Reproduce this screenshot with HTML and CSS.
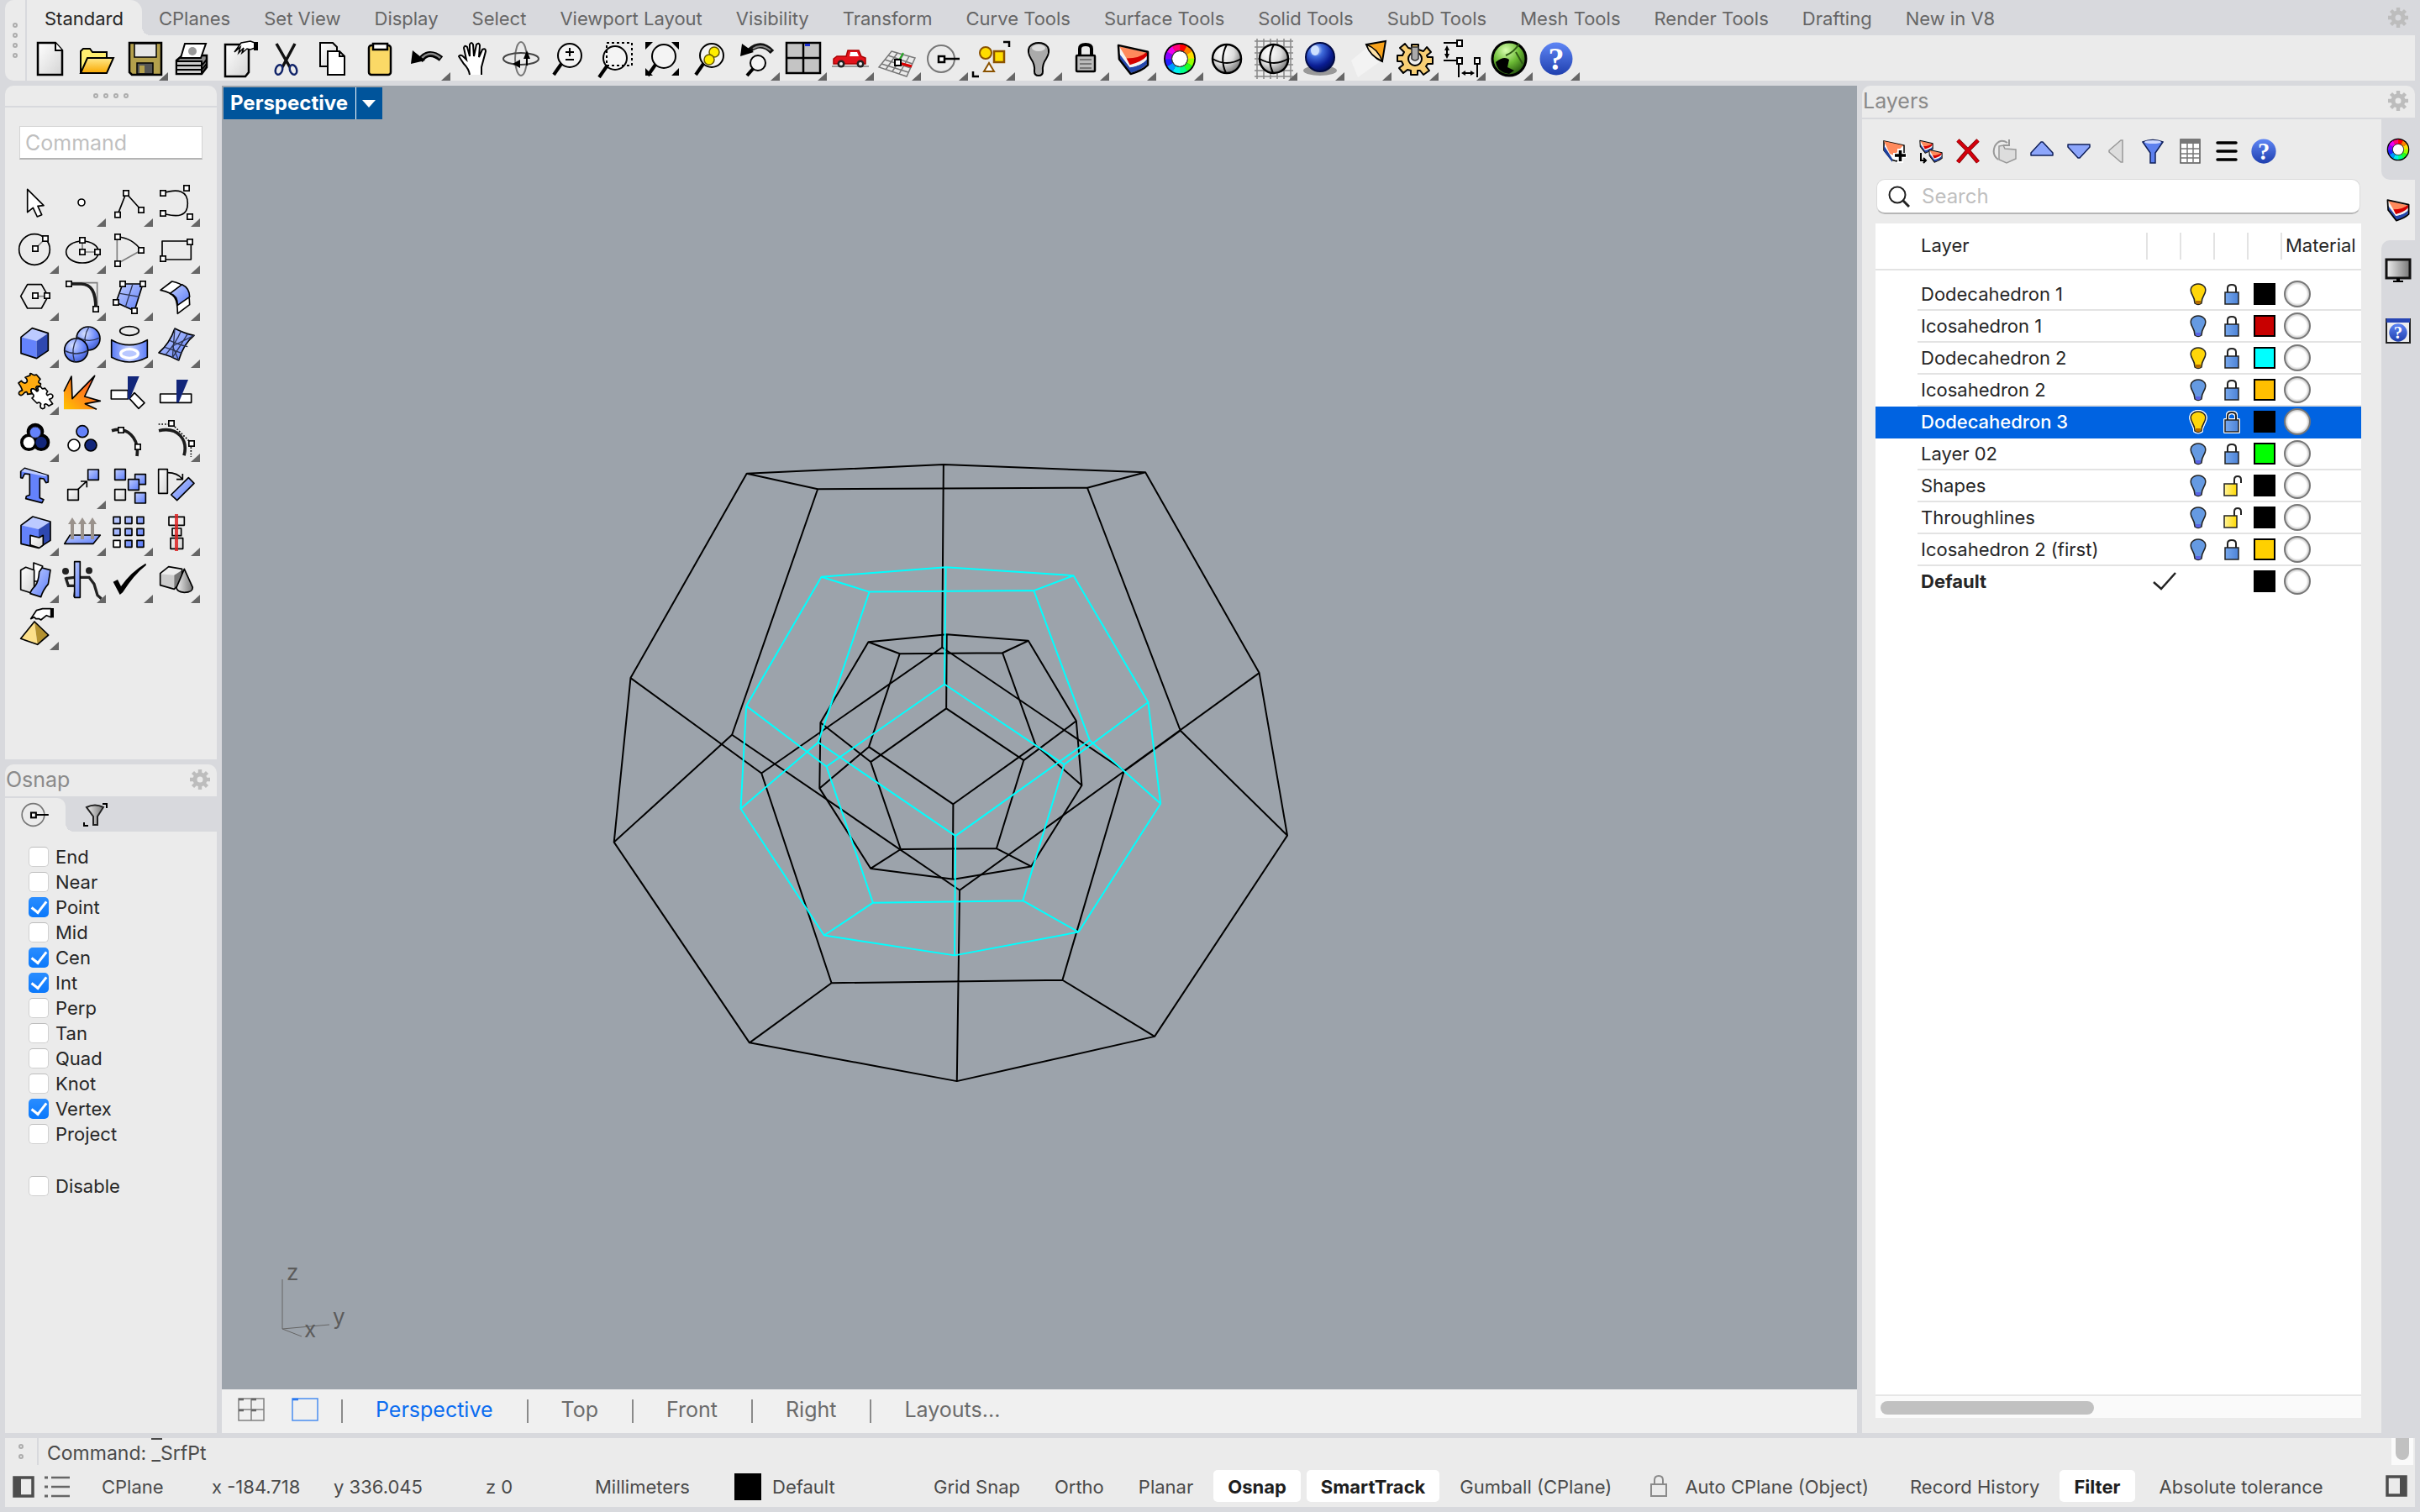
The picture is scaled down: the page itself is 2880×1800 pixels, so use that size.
FILE: index.html
```html
<!DOCTYPE html>
<html lang="en">
<head>
<meta charset="utf-8">
<title>Perspective</title>
<link rel="stylesheet" href="styles.css">
</head>
<body>
<svg class="defs" aria-hidden="true">
  <defs>
    <linearGradient id="paper" x1="0" y1="0" x2="1" y2="1"><stop offset="0" stop-color="#fff"/><stop offset="1" stop-color="#d4d4d4"/></linearGradient>
    <linearGradient id="blue" x1="0" y1="0" x2="1" y2="1"><stop offset="0" stop-color="#c2cfff"/><stop offset="1" stop-color="#5b7cf8"/></linearGradient>
    <linearGradient id="band" x1="0" x2="1"><stop offset="0" stop-color="#5b7cf8"/><stop offset=".5" stop-color="#c2cfff"/><stop offset="1" stop-color="#5b7cf8"/></linearGradient>
    <linearGradient id="gold" x1="0" y1="0" x2="0" y2="1"><stop offset="0" stop-color="#ffe98a"/><stop offset="1" stop-color="#f9a800"/></linearGradient>
    <linearGradient id="fire" x1="1" y1="0" x2="0" y2="1"><stop offset="0.2" stop-color="#ff5a2a"/><stop offset="1" stop-color="#ffc400"/></linearGradient>
    <linearGradient id="help" x1="0" y1="0" x2="0" y2="1"><stop offset="0" stop-color="#5f86f5"/><stop offset="1" stop-color="#1f3fae"/></linearGradient>
    <linearGradient id="steel" x1="0" x2="1"><stop offset="0" stop-color="#eee"/><stop offset="1" stop-color="#777"/></linearGradient>
    <linearGradient id="lockfill" x1="0" x2="1"><stop offset="0" stop-color="#78a9ee"/><stop offset="1" stop-color="#4c82d6"/></linearGradient>
    <linearGradient id="openfill" x1="0" x2="1"><stop offset="0" stop-color="#fff39a"/><stop offset="1" stop-color="#ffd900"/></linearGradient>
    <radialGradient id="ballw" cx=".35" cy=".3" r=".8"><stop offset="0" stop-color="#fff"/><stop offset=".5" stop-color="#ddd"/><stop offset="1" stop-color="#666"/></radialGradient>
    <radialGradient id="ballb" cx=".35" cy=".3" r=".8"><stop offset="0" stop-color="#d5dfff"/><stop offset=".6" stop-color="#6a88fa"/><stop offset="1" stop-color="#3a52c0"/></radialGradient>
    <radialGradient id="balln" cx=".35" cy=".25" r=".8"><stop offset="0" stop-color="#e8f2ff"/><stop offset=".3" stop-color="#3f6bdc"/><stop offset=".7" stop-color="#0a1d93"/><stop offset="1" stop-color="#000c50"/></radialGradient>
    <radialGradient id="ballg" cx=".4" cy=".25" r=".8"><stop offset="0" stop-color="#d8ffb0"/><stop offset=".5" stop-color="#6cbb35"/><stop offset="1" stop-color="#1d4a0a"/></radialGradient>
    <radialGradient id="rim"><stop offset=".72" stop-color="#fff"/><stop offset="1" stop-color="#b8b8b8"/></radialGradient>

    <g id="hd"><rect x="-9.500" y="-9.500" width="19" height="19" fill="#fff" stroke="#000" stroke-width="5"/></g>
    <g id="lens"><path d="M18 34 9 47" stroke="#000" stroke-width="4" fill="none"/><circle cx="28" cy="24" r="14" fill="#f6f6f6" fill-opacity=".8" stroke="#000" stroke-width="2"/></g>

    <symbol id="gear" viewBox="0 0 24 24"><g fill="none" stroke="#bdbdbd"><circle cx="12" cy="12" r="6" stroke-width="5"/><path stroke-width="4.400" d="M12 0v5M12 19v5M0 12h5M19 12h5M3.500 3.500l3.500 3.500M17 17l3.500 3.500M20.500 3.500 17 7M7 17l-3.500 3.500"/></g></symbol>
    <symbol id="wheel" viewBox="0 0 40 40"><circle cx="20" cy="20" r="19" fill="#000"/><circle cx="20" cy="20" r="9" fill="#fff"/>
      <g fill="none" stroke-width="7.500">
        <path stroke="#f00" d="M20 6.500A13.500 13.500 0 0 1 26.750 8.300"/><path stroke="#ff8000" d="M26.500 8.200A13.500 13.500 0 0 1 31.690 13.250"/><path stroke="#fd0" d="M31.500 13A13.500 13.500 0 0 1 33.500 20"/><path stroke="#9f0" d="M33.500 19.700A13.500 13.500 0 0 1 31.690 26.750"/><path stroke="#2f2" d="M31.800 26.500A13.500 13.500 0 0 1 26.750 31.690"/><path stroke="#0f8" d="M27 31.500A13.500 13.500 0 0 1 20 33.500"/><path stroke="#0ee" d="M20.300 33.500A13.500 13.500 0 0 1 13.250 31.690"/><path stroke="#09f" d="M13.500 31.800A13.500 13.500 0 0 1 8.310 26.750"/><path stroke="#22f" d="M8.500 27A13.500 13.500 0 0 1 6.500 20"/><path stroke="#80f" d="M6.500 20.300A13.500 13.500 0 0 1 8.310 13.250"/><path stroke="#e0e" d="M8.200 13.500A13.500 13.500 0 0 1 13.250 8.310"/><path stroke="#f07" d="M13 8.500A13.500 13.500 0 0 1 20.200 6.500"/>
      </g><circle cx="20" cy="20" r="9.500" fill="none" stroke="#444" stroke-width="1"/></symbol>
    <symbol id="layers" viewBox="0 0 40 40"><path d="M2 3 38 11V27Q31 34 17 38L3 20z" fill="#f4f4f4"/><path d="M4 20 17 37Q31 33 37 26V20Q30 28 16 30L3 13z" fill="#2547ac"/><path d="M3 10 16 30Q30 28 37 20V16Q30 24 16 26z" fill="#f2f2f2"/><path d="M3 4 16 26Q31 22 37 12z" fill="#ff8a5c"/><path d="M12 19 16 27Q31 23 37 16V11Q28 19 12 19z" fill="#d40000"/><path d="M2 3 38 11V27Q31 34 17 38L3 20z" fill="none" stroke="#000" stroke-width="2.500" stroke-linejoin="round"/></symbol>
    <symbol id="helpball" viewBox="0 0 40 40"><circle cx="20" cy="20" r="19.500" fill="url(#help)"/><text x="20" y="33" class="qmark">?</text></symbol>
    <symbol id="snap" viewBox="0 0 40 36"><circle cx="17" cy="18" r="16" fill="none" stroke="#777" stroke-width="2"/><path d="M20 18H39" stroke="#000" stroke-width="2.500"/><rect x="14" y="15" width="7" height="7" fill="#fff" stroke="#000" stroke-width="2.500"/></symbol>
    <symbol id="bulb-on" viewBox="0 0 24 32"><path d="M8 27Q8 22 5 17Q2 12 4 8Q7 4 12 4T20 8Q22 12 19 17Q16 22 16 27Q12 30 8 27z" fill="#ffd60a" stroke="#222" stroke-width="1.500"/><path d="M9 24h6v3q-3 2-6 0z" fill="#b56a00"/></symbol>
    <symbol id="bulb-off" viewBox="0 0 24 32"><path d="M8 27Q8 22 5 17Q2 12 4 8Q7 4 12 4T20 8Q22 12 19 17Q16 22 16 27Q12 30 8 27z" fill="#659ae2" stroke="#222" stroke-width="1.500"/><path d="M9 24h6v3q-3 2-6 0z" fill="#5a63e6"/></symbol>
    <symbol id="locked" viewBox="0 0 24 32"><path d="M7 14V9Q7 5 12 5T17 9V14" fill="none" stroke="#222" stroke-width="2"/><rect x="4" y="14" width="16" height="14" fill="url(#lockfill)" stroke="#222" stroke-width="1.500"/></symbol>
    <symbol id="unlocked" viewBox="0 0 24 32"><path d="M15 14V9Q15 5 19 5T23 9V13" fill="none" stroke="#222" stroke-width="2"/><rect x="3" y="14" width="15" height="14" fill="url(#openfill)" stroke="#222" stroke-width="1.500"/></symbol>
    <symbol id="ball" viewBox="0 0 32 32"><circle cx="16" cy="16" r="15" fill="url(#rim)" stroke="#777" stroke-width="2"/></symbol>
  </defs>
</svg>

<header class="ribbon">
  <div class="grip grip-v"><i></i><i></i><i></i><i></i></div>
  <div class="ribbon-body">
    <nav class="ribbon-tabs">
      <button class="on">Standard</button><button>CPlanes</button><button>Set View</button><button>Display</button><button>Select</button><button>Viewport Layout</button><button>Visibility</button><button>Transform</button><button>Curve Tools</button><button>Surface Tools</button><button>Solid Tools</button><button>SubD Tools</button><button>Mesh Tools</button><button>Render Tools</button><button>Drafting</button><button>New in V8</button>
      <button class="gear-btn" aria-label="Toolbar options"><svg class="gear"><use href="#gear"/></svg></button>
    </nav>
    <div class="tools">
      <button aria-label="New"><svg viewBox="0 0 56 54"><path d="M13 9H34L42 18V47H13z" fill="url(#paper)" stroke="#000" stroke-width="2.500"/><path d="M34 9V18H42" fill="#fff" stroke="#000" stroke-width="2"/></svg></button>
      <button aria-label="Open"><svg viewBox="0 0 56 54"><path d="M8 45V19L11 16H19L22 20H39V27" fill="#ffee70" stroke="#000" stroke-width="2"/><path d="M8 45 16 27H47L39 45z" fill="url(#gold)" stroke="#000" stroke-width="2"/></svg></button>
      <button class="more" aria-label="Save"><svg viewBox="0 0 56 54"><path d="M10 9H48V47H13L10 44z" fill="#b4a04c" stroke="#000" stroke-width="2.500"/><rect x="16" y="10" width="26" height="16" fill="#e6e6e6" stroke="#000" stroke-width="1.500"/><rect x="19" y="33" width="19" height="13" fill="#555" stroke="#000" stroke-width="1.500"/><rect x="22" y="36" width="6" height="9" fill="#b4a04c"/></svg></button>
      <button aria-label="Print"><svg viewBox="0 0 56 54"><path d="M10 30 17 24H46V38L40 46H10z" fill="#888" stroke="#000" stroke-width="2.500"/><path d="M10 31H40V46H10z" fill="#ccc" stroke="#000" stroke-width="2"/><path d="M15 27 20 10H45L39 27z" fill="#fff" stroke="#000" stroke-width="2"/><circle cx="29" cy="19" r="5" fill="#999"/><path d="M10 36H40L46 29M10 41H40L46 34" stroke="#000" stroke-width="2" fill="none"/></svg></button>
      <button aria-label="Document properties"><svg viewBox="0 0 56 54"><path d="M12 11H35L40 17V44L36 49H12z" fill="url(#paper)" stroke="#000" stroke-width="2.500"/><path d="M23 20 31 9 42 7 50 10V14L42 17 38 16 32 21 34 15 28 21 30 14z" fill="#fff" stroke="#000" stroke-width="1.500"/><path d="M46 8h5v10h-5z"/></svg></button>
      <button aria-label="Cut"><svg viewBox="0 0 56 54"><path d="M17 10 33 38M39 10 24 38" stroke="#111" stroke-width="3.500" fill="none"/><g fill="none" stroke="#12256a" stroke-width="2.500"><ellipse cx="20" cy="41" rx="4" ry="6" transform="rotate(20 20 41)"/><ellipse cx="37" cy="41" rx="4" ry="6" transform="rotate(-20 37 41)"/></g></svg></button>
      <button aria-label="Copy"><svg viewBox="0 0 56 54"><path d="M13 9H28L33 14V37H13z" fill="url(#paper)" stroke="#000" stroke-width="2"/><path d="M22 19H36L42 25V47H22z" fill="#fff" stroke="#000" stroke-width="2"/><path d="M36 19V25H42" fill="none" stroke="#000" stroke-width="2"/></svg></button>
      <button aria-label="Paste"><svg viewBox="0 0 56 54"><rect x="15" y="12" width="26" height="35" rx="3" fill="#fbd966" stroke="#000" stroke-width="2.500"/><path d="M20 10H37V17H20z" fill="#fff" stroke="#000" stroke-width="2.500"/></svg></button>
      <button class="more" aria-label="Undo"><svg viewBox="0 0 56 54"><path d="M20 30Q30 16 45 28" fill="none" stroke="#000" stroke-width="7"/><path d="M22 27Q32 17 44 27" fill="none" stroke="#888" stroke-width="2.500"/><path d="M9 34 11 18 26 30z"/></svg></button>
      <button aria-label="Pan"><svg viewBox="0 0 56 54"><path d="M23 47Q22 40 16 34L10 25Q12 22 16 26L19 29 16 15Q17 11 20 14L23 25 23 11Q25 7 27 11L28 25 31 11Q34 8 35 12L34 26 38 17Q42 15 42 19L37 38V47" fill="#fff" stroke="#000" stroke-width="2"/></svg></button>
      <button aria-label="Rotate view"><svg viewBox="0 0 56 54"><ellipse cx="28" cy="28" rx="7" ry="20" fill="none" stroke="#777" stroke-width="2"/><ellipse cx="28" cy="28" rx="21" ry="7" fill="none" stroke="#444" stroke-width="2"/><path d="M35 18 39 28H31zM18 34 27 29V39z"/><path d="M35 22V36" stroke="#000" stroke-width="2"/></svg></button>
      <button aria-label="Zoom"><svg viewBox="0 0 56 54"><use href="#lens" x="2"/><path d="M25 20H35M30 15V25M25 29H35" stroke="#000" stroke-width="2"/></svg></button>
      <button aria-label="Zoom window"><svg viewBox="0 0 56 54"><use href="#lens" y="3"/><path d="M18 9H48V36H18z" fill="none" stroke="#000" stroke-width="2" stroke-dasharray="3 3"/></svg></button>
      <button aria-label="Zoom extents"><svg viewBox="0 0 56 54"><use href="#lens" x="2" y="1"/><path d="M8 8H17L8 17zM48 8H39L48 17zM48 48H39L48 39zM8 48H17L8 39z"/></svg></button>
      <button aria-label="Zoom selected"><svg viewBox="0 0 56 54"><use href="#lens" x="3"/><circle cx="34" cy="20" r="6" fill="#fe0" stroke="#665800" stroke-width="1.500"/><circle cx="28" cy="29" r="6" fill="#fe0" stroke="#665800" stroke-width="1.500"/></svg></button>
      <button class="more" aria-label="Undo view"><svg viewBox="0 0 56 54"><path d="M20 18Q34 6 47 20" fill="none" stroke="#111" stroke-width="6"/><path d="M24 16Q34 9 45 18" fill="none" stroke="#888" stroke-width="2"/><path d="M9 25 11 10 25 20z"/><path d="M24 40 17 48" stroke="#000" stroke-width="4"/><circle cx="30" cy="33" r="9" fill="#f4f4f4" stroke="#000" stroke-width="2"/></svg></button>
      <button class="more" aria-label="4 view"><svg viewBox="0 0 56 54"><path d="M8 9H48V45H8z" fill="#c4c4c4" stroke="#000" stroke-width="2.500"/><path d="M28 9V45M8 27H48" stroke="#000" stroke-width="2.500"/><path d="M30 10h6v3h-6z" fill="#1b2fd0"/></svg></button>
      <button class="more" aria-label="Named views"><svg viewBox="0 0 56 54"><path d="M6 37H50" stroke="#999" stroke-width="2"/><path d="M8 34V28L12 25H23L25 18H38L41 25 46 27V34z" fill="#e3121b" stroke="#a00" stroke-width="1.500"/><path d="M28 20H36L38 25H27z" fill="#fff"/><circle cx="17" cy="34" r="4.500" fill="#222"/><circle cx="40" cy="34" r="4.500" fill="#222"/><circle cx="17" cy="34" r="2" fill="#eee"/><circle cx="40" cy="34" r="2" fill="#eee"/></svg></button>
      <button class="more" aria-label="Set CPlane"><svg viewBox="0 0 56 54"><path d="M21 19 49 27 39 49 6 38zM28 21 14 41M35 23 22 43M42 25 30 46M17 24 46 34M13 29 44 39M9 34 41 44" fill="none" stroke="#777" stroke-width="1.500"/><path d="M28 33 35 21" stroke="#2a2" stroke-width="2"/><path d="M30 33 45 37" stroke="#d00" stroke-width="3"/><rect x="25" y="29" width="7" height="7" fill="#fff" stroke="#000" stroke-width="2"/></svg></button>
      <button class="more" aria-label="Object snap"><svg viewBox="0 0 56 54"><use href="#snap" x="7" y="10" width="40" height="36"/></svg></button>
      <button class="more" aria-label="Select"><svg viewBox="0 0 56 54"><circle cx="21" cy="21" r="7" fill="#fd0" stroke="#8a5200" stroke-width="2"/><rect x="31" y="19" width="12" height="13" fill="#fd0" stroke="#8a5200" stroke-width="2.500"/><path d="M25 33 31 43H19z" fill="#fff" stroke="#8a5200" stroke-width="2"/><path d="M42 8H49V14M6 43V49H13" fill="none" stroke="#000" stroke-width="2.500"/></svg></button>
      <button class="more" aria-label="Visibility"><svg viewBox="0 0 56 54"><path d="M23 43Q24 35 19 28Q14 20 17 14Q21 9 28 9T39 14Q42 20 37 28Q32 35 33 43Q33 48 28 48T23 43z" fill="#aaa" stroke="#000" stroke-width="2"/><ellipse cx="28" cy="15" rx="8" ry="4" fill="#ddd"/></svg></button>
      <button class="more" aria-label="Lock"><svg viewBox="0 0 56 54"><path d="M21 24V16Q21 11 28 11T35 16V24" fill="none" stroke="#000" stroke-width="4"/><rect x="17" y="24" width="22" height="19" rx="1" fill="#bbb" stroke="#000" stroke-width="2.500"/><path d="M21 29H35M21 34H35M21 39H35" stroke="#777" stroke-width="2"/></svg></button>
      <button class="more" aria-label="Layers"><svg viewBox="0 0 56 54"><use href="#layers" x="9" y="9" width="39" height="39"/></svg></button>
      <button class="more" aria-label="Properties"><svg viewBox="0 0 56 54"><use href="#wheel" x="8" y="8" width="40" height="40"/></svg></button>
      <button aria-label="Shade"><svg viewBox="0 0 56 54"><circle cx="28" cy="28" r="17" fill="url(#ballw)" stroke="#000" stroke-width="2.500"/><path d="M28 11Q19 28 27 45M11 28Q28 38 45 28" fill="none" stroke="#000" stroke-width="2"/></svg></button>
      <button class="more" aria-label="Render shade"><svg viewBox="0 0 56 54"><path d="M5 7H51M5 14H51M5 42H51M5 49H51M5 21H14M5 28H12M5 35H14M42 21H51M44 28H51M42 35H51M8 4V52M16 4V52M24 4V12M32 4V12M40 4V52M48 4V52M24 44V52M32 44V52" stroke="#888" stroke-width="1.500"/><circle cx="28" cy="28" r="17" fill="url(#ballw)" stroke="#000" stroke-width="2.500"/><path d="M28 11Q19 28 27 45M11 28Q28 38 45 28" fill="none" stroke="#000" stroke-width="2"/></svg></button>
      <button class="more" aria-label="Render"><svg viewBox="0 0 56 54"><ellipse cx="27" cy="42" rx="20" ry="6" fill="#999"/><circle cx="27" cy="26" r="17" fill="url(#balln)" stroke="#000a44" stroke-width="2"/><ellipse cx="21" cy="18" rx="5" ry="6" fill="#cfe2ff"/></svg></button>
      <button class="more" aria-label="Spotlight"><svg viewBox="0 0 56 54"><path d="M30 12 8 30 16 50 44 30z" fill="#f8f8f8" opacity=".6"/><path d="M26 11 49 7 45 31Q32 26 26 11z" fill="#f8a31c" stroke="#000" stroke-width="2"/><path d="M26 11Q30 24 45 31 40 16 26 11z" fill="#ffe2a8" stroke="#000" stroke-width="1.500"/></svg></button>
      <button class="more" aria-label="Options"><svg viewBox="0 0 56 54"><path d="M24 11H32V17L38 19 42 14 47 20 42 24 43 26H49V34H43L41 37 45 42 38 47 34 42H31V47H23V42L19 41 14 45 9 39 14 35 12 31H7V24H13L15 20 10 15 16 10 20 15 24 16z" fill="#f8cf75" stroke="#000" stroke-width="2" stroke-linejoin="round"/><circle cx="28" cy="28" r="8" fill="#eee" stroke="#000" stroke-width="2"/><path d="M24 14h8v14q-4 4-8 0z" fill="#aaa" stroke="#333" stroke-width="1.500"/></svg></button>
      <button class="more" aria-label="Dimension"><svg viewBox="0 0 56 54"><path d="M6 9H22M6 30H22M10 14V26M24 34V50M46 34V50M29 45H41" fill="none" stroke="#000" stroke-width="2"/><path d="M10 12 13 18H7zM10 28 13 22H7zM27 45 32 42V48zM43 45 38 42V48z"/><g fill="#fff" stroke="#000" stroke-width="2"><path d="M22 6h6v7h-6zM22 27h6v7h-6zM43 27h6v7h-6z"/></g></svg></button>
      <button class="more" aria-label="Grasshopper"><svg viewBox="0 0 56 54"><circle cx="28" cy="28" r="20" fill="url(#ballg)" stroke="#000" stroke-width="3"/><path d="M12 32Q22 24 28 29L26 38 34 42 28 46Q14 44 12 32z"/><path d="M24 24Q34 20 40 10M36 20 44 34" fill="none" stroke="#305b16" stroke-width="2"/></svg></button>
      <button class="more" aria-label="Help"><svg viewBox="0 0 56 54"><use href="#helpball" x="8" y="8" width="40" height="40"/></svg></button>
    </div>
  </div>
</header>

<main class="work">
  <div class="left">
    <section class="panel palette">
      <div class="grip grip-h"><i></i><i></i><i></i><i></i></div>
      <input class="cmd" type="text" placeholder="Command" aria-label="Command">
      <div class="grid">
        <button aria-label="Select"><svg viewBox="0 0 168 168"><path class="w" d="M56 34V116L76 100 91 132 107 125 93 94 114 92z"/></svg></button>
        <button class="more" aria-label="Point"><svg viewBox="0 0 168 168"><circle class="w" cx="81" cy="81" r="12"/></svg></button>
        <button class="more" aria-label="Polyline"><svg viewBox="0 0 168 168"><path class="k" d="M42 125 72 48 126 108"/><use href="#hd" x="72" y="48"/><use href="#hd" x="42" y="125"/><use href="#hd" x="126" y="108"/></svg></button>
        <button class="more" aria-label="Curve"><svg viewBox="0 0 168 168"><path class="k" d="M36 48C90 30 124 40 124 85C124 130 90 136 36 120"/><use href="#hd" x="120" y="30"/><use href="#hd" x="36" y="48"/><use href="#hd" x="36" y="120"/><use href="#hd" x="132" y="132"/></svg></button>

        <button class="more" aria-label="Circle"><svg viewBox="0 0 168 168"><circle class="k" cx="81" cy="81" r="55"/><path class="g" d="M84 78 120 42"/><use href="#hd" x="120" y="42"/><use href="#hd" x="84" y="78"/></svg></button>
        <button class="more" aria-label="Ellipse"><svg viewBox="0 0 168 168"><ellipse class="k" cx="84" cy="90" rx="58" ry="39"/><path class="g" d="M84 48V90H138"/><use href="#hd" x="84" y="48"/><use href="#hd" x="84" y="90"/><use href="#hd" x="138" y="90"/></svg></button>
        <button class="more" aria-label="Arc"><svg viewBox="0 0 168 168"><path class="g" d="M40 36V132L126 84"/><path class="k" d="M42 36Q95 40 126 84"/><use href="#hd" x="42" y="36"/><use href="#hd" x="126" y="84"/><use href="#hd" x="42" y="132"/></svg></button>
        <button class="more" aria-label="Rectangle"><svg viewBox="0 0 168 168"><path class="k" d="M33 51H136V117H33z"/><use href="#hd" x="132" y="54"/><use href="#hd" x="36" y="114"/></svg></button>

        <button class="more" aria-label="Polygon"><svg viewBox="0 0 168 168"><path class="k" d="M32 80 56 38H106L130 80 106 123H56z"/><path class="g" d="M84 80H126"/><use href="#hd" x="84" y="78"/><use href="#hd" x="126" y="78"/></svg></button>
        <button class="more" aria-label="Fillet"><svg viewBox="0 0 168 168"><path class="g" d="M36 32H137V126"/><path class="thick" d="M36 36H80C116 38 132 62 132 126"/><use href="#hd" x="36" y="36"/><use href="#hd" x="132" y="126"/></svg></button>
        <button class="more" aria-label="Surface from points"><svg viewBox="0 0 168 168"><path class="b" d="M60 36H132L102 132 36 102z"/><path class="t" d="M96 36 70 118M50 70 120 82"/><use href="#hd" x="60" y="36"/><use href="#hd" x="132" y="36"/><use href="#hd" x="102" y="132"/><use href="#hd" x="36" y="102"/></svg></button>
        <button class="more" aria-label="Sweep"><svg viewBox="0 0 168 168"><path class="w" d="M27 58 68 27C108 34 131 55 131 110L88 142C88 90 80 68 27 58z"/><path class="b" d="M61 70 104 38C125 48 131 62 131 82L88 112C88 90 82 76 61 70z"/></svg></button>

        <button class="more" aria-label="Box"><svg viewBox="0 0 168 168"><path fill="#bccaff" d="M73 26 130 44 89 72 33 58z"/><path fill="#6482fb" d="M33 58 89 72V134L33 116z"/><path fill="#2e48b0" d="M89 72 130 44V106L89 134z"/><path class="k" d="M73 26 130 44V106L89 134 33 116V58z"/></svg></button>
        <button class="more" aria-label="Boolean"><svg viewBox="0 0 168 168"><circle class="k sphere" cx="105" cy="63" r="42"/><path class="t" d="M64 56Q105 82 146 60M108 21Q84 60 98 100"/><circle class="k sphere" cx="62" cy="105" r="42"/><path class="t" d="M21 106Q62 128 103 106M64 63Q42 100 56 146"/></svg></button>
        <button class="more" aria-label="Project"><svg viewBox="0 0 168 168"><ellipse class="k" cx="84" cy="36" rx="34" ry="16"/><path class="k band" d="M20 68Q84 104 148 68V130Q84 164 20 130z"/><ellipse cx="84" cy="117" rx="31" ry="16" fill="#b9c8ff" stroke="#fff" stroke-width="10"/></svg></button>
        <button class="more" aria-label="Mesh"><svg viewBox="0 0 168 168"><path class="b" d="M78 27Q110 44 147 52Q110 80 92 141Q60 124 21 114Q60 80 78 27z"/><path class="t" d="M60 70Q94 86 124 92M42 94Q74 104 104 116M100 37Q82 80 45 121M124 46Q100 86 70 131M78 27 70 131M147 52 70 90 92 141"/></svg></button>

        <button class="more" aria-label="Join"><svg viewBox="0 0 168 168"><path class="k orange" d="M24 54 34 46Q46 60 54 50 58 42 48 34L66 26Q62 16 72 22 80 28 88 24L102 40Q92 50 98 54 108 54 100 66 90 62 86 70L92 84Q78 70 70 76 66 84 74 92L56 94Q56 82 46 88 34 104 26 94 22 84 38 80 34 68 24 54z"/><path class="w" d="M74 92Q66 84 70 76 78 70 90 84 98 82 92 72 96 62 106 70 108 78 118 72L128 84Q120 94 128 98 140 88 146 98 150 108 134 112L146 128 132 136Q122 124 116 132 122 144 110 146 98 144 104 128 98 120 90 126L72 108Q84 100 74 92z"/></svg></button>
        <button aria-label="Explode"><svg viewBox="0 0 168 168"><path fill="url(#fire)" d="M18 84 45 30 48 110 128 28 92 102 148 118 94 128 135 148H18z"/><path class="k" d="M18 84 45 30 48 110 128 28 92 102 148 118 94 128 135 148"/></svg></button>
        <button aria-label="Trim"><svg viewBox="0 0 168 168"><path class="w" d="M19 80H79V111H19zM102 89 138 125 117 145 84 109z"/><path fill="#12267a" d="M78 30H119L85 112H78z"/></svg></button>
        <button aria-label="Split"><svg viewBox="0 0 168 168"><path class="w" d="M26 93H137V124H26z"/><path fill="#12267a" d="M84 42H126L92 124H84z"/></svg></button>

        <button class="more" aria-label="Group"><svg viewBox="0 0 168 168"><g stroke="#000" stroke-width="22"><circle cx="84" cy="60" r="20"/><circle cx="61" cy="98" r="20"/><circle cx="105" cy="98" r="20"/></g><circle cx="105" cy="98" r="20" fill="#12267a"/><circle cx="61" cy="98" r="20" fill="#fff"/><circle cx="84" cy="62" r="20" fill="#6482fb" stroke="#223" stroke-width="3"/></svg></button>
        <button aria-label="Ungroup"><svg viewBox="0 0 168 168"><circle class="k cobalt" cx="84" cy="59" r="21"/><circle class="w" cx="54" cy="108" r="21"/><circle class="k navy" cx="114" cy="108" r="21"/></svg></button>
        <button aria-label="Edit points"><svg viewBox="0 0 168 168"><path class="thick" d="M21 56C75 40 120 80 111 147"/><use href="#hd" x="54" y="54"/><use href="#hd" x="114" y="114"/></svg></button>
        <button class="more" aria-label="Control points"><svg viewBox="0 0 168 168"><path class="thick" d="M21 56C90 40 126 90 111 145"/><path d="M20 33H56M78 42 128 92M136 115V150" fill="none" stroke="#000" stroke-width="5" stroke-dasharray="5 6"/><use href="#hd" x="66" y="30"/><use href="#hd" x="138" y="102"/></svg></button>

        <button aria-label="Text"><svg viewBox="0 0 168 168"><path class="k cobalt" d="M32 34 46 22 130 48V72L122 74 114 60 100 58V128L114 134 108 146 50 131 52 122 64 118V44L46 42 38 58 32 56z"/><path d="M34 34 46 24 128 48 118 52z" fill="#bccaff"/></svg></button>
        <button class="more" aria-label="Move"><svg viewBox="0 0 168 168"><path class="k" d="M66 100 100 68M78 69H100V91"/><path class="w paper" d="M32 98H70V136H32z"/><path class="b" d="M104 27H142V64H104z"/></svg></button>
        <button aria-label="Copy"><svg viewBox="0 0 168 168"><path class="b" d="M32 26H70V64H32z"/><path class="b" d="M104 44H142V80H104z"/><path class="b" d="M80 62H118V100H80z"/><path class="w paper" d="M32 98H70V136H32z"/><path class="b" d="M104 110H142V147H104z"/></svg></button>
        <button aria-label="Rotate"><svg viewBox="0 0 168 168"><path class="w paper" d="M20 26H52V112H20z"/><path class="k" d="M52 38Q88 38 106 62M84 62H106V42"/><path class="b" d="M127 56 147 76 86 137 65 117z"/></svg></button>

        <button class="more" aria-label="Solid edit"><svg viewBox="0 0 168 168"><path fill="#bccaff" d="M75 27 138 45 96 72 33 58z"/><path fill="#6482fb" d="M33 58 96 72V139L33 124z"/><path fill="#2e48b0" d="M96 72 138 45V112L96 139z"/><path class="k" d="M75 27 138 45V112L96 139 33 124V58z"/><path class="w paper" d="M66 94 98 102 112 94V129L98 139 66 128z"/></svg></button>
        <button class="more" aria-label="Extrude"><svg viewBox="0 0 168 168"><path class="b" d="M40 93H148L123 124H20z"/><g fill="#9a928c"><path d="M48 30 63 54H54V108H42V54H33zM84 30 99 54H90V108H78V54H69zM120 30 135 54H126V108H114V54H105z"/></g></svg></button>
        <button class="more" aria-label="Array"><svg viewBox="0 0 168 168"><path class="b" d="M27 28H51V52H27zM69 28H93V52H69zM111 28H135V52H111zM27 70H51V94H27zM69 70H93V94H69zM111 70H135V94H111zM69 112H93V136H69zM111 112H135V136H111z"/><path class="w" d="M27 112H51V136H27z"/></svg></button>
        <button class="more" aria-label="Align"><svg viewBox="0 0 168 168"><path class="w paper" d="M57 28H112V58H57zM69 69H101V95H69zM63 104H107V142H63z"/><path fill="#d22" fill-opacity=".85" d="M78 18H90V150H78z"/></svg></button>

        <button class="more" aria-label="Twist"><svg viewBox="0 0 168 168"><path class="w" d="M78 24 110 36 98 90H78z"/><path class="w paper" d="M32 50 50 40 80 50V120L70 132 32 120z"/><path class="b" d="M98 56 108 42 138 50 130 100Q112 120 104 146L66 134Q66 124 84 106 96 90 98 56z"/></svg></button>
        <button class="more" aria-label="Analyze direction"><svg viewBox="0 0 168 168"><g fill="#222"><circle cx="24" cy="54" r="12"/><circle cx="108" cy="52" r="12"/></g><path d="M24 76 34 106H62L56 146M24 80 56 76M78 76H108L126 100 138 140 152 152" fill="none" stroke="#222" stroke-width="10"/><path class="b" d="M56 20H76V148H56z"/></svg></button>
        <button class="more" aria-label="Check"><svg viewBox="0 0 168 168"><path d="M26 92 42 84 54 108Q90 56 142 26L144 32Q100 66 60 130L50 138z"/></svg></button>
        <button class="more" aria-label="Primitives"><svg viewBox="0 0 168 168"><path fill="#eee" d="M56 38 104 50 76 68 26 64z"/><path fill="#ccc" d="M26 64 76 68V118L26 104z"/><path fill="#777" d="M76 68 104 50V98L76 118z"/><path class="k" d="M56 38 104 46V90L76 118 26 104V62z"/><path class="k steel" d="M112 46 142 112Q142 130 112 130 84 128 84 112z"/></svg></button>

        <button class="more" aria-label="Select objects"><svg viewBox="0 0 168 168"><path fill="#fce08a" d="M81 66 92 148 32 127z"/><path fill="#b3912f" d="M81 66 131 114 92 148z"/><path class="k" d="M81 66 131 114 92 148 32 127z"/><path class="w" d="M68 56 88 26 110 20H140V50L124 44 104 60 98 56 86 56 80 50z"/><path d="M140 18h10v34h-10z"/></svg></button>
      </div>
    </section>

    <section class="panel osnap">
      <h2 class="title">Osnap<button aria-label="Osnap options"><svg class="gear"><use href="#gear"/></svg></button></h2>
      <div class="otabs">
        <button class="on" aria-label="Object snaps"><svg width="34" height="30"><use href="#snap"/></svg></button>
        <button aria-label="Selection filter"><svg width="30" height="30" viewBox="0 0 30 30"><path d="M4 6Q14 1 24 6L17 17V27H12V17z" fill="url(#steel)" stroke="#222" stroke-width="2"/><path d="M23 2H28V7M1 24V28H6" fill="none" stroke="#000" stroke-width="2"/></svg></button>
      </div>
      <div class="checks">
        <label><input type="checkbox">End</label>
        <label><input type="checkbox">Near</label>
        <label><input type="checkbox" checked>Point</label>
        <label><input type="checkbox">Mid</label>
        <label><input type="checkbox" checked>Cen</label>
        <label><input type="checkbox" checked>Int</label>
        <label><input type="checkbox">Perp</label>
        <label><input type="checkbox">Tan</label>
        <label><input type="checkbox">Quad</label>
        <label><input type="checkbox">Knot</label>
        <label><input type="checkbox" checked>Vertex</label>
        <label><input type="checkbox">Project</label>
        <label class="apart"><input type="checkbox">Disable</label>
      </div>
    </section>
  </div>

  <section class="view">
    <div class="canvas">
      <svg class="scene" viewBox="0 0 1946 1552" preserveAspectRatio="xMinYMin meet">
        <svg x="436" y="428" width="860" height="780" viewBox="0 0 1568 1568" preserveAspectRatio="none">
          <g class="wire">
            <path d="M771 46 1209 65 1456 545 1517 934 1229 1415 800 1522 350 1430 56 950 92 557 344 68zM344 68 498 105 1083 102 1209 65M498 105 312 693 56 950M1083 102 1285 683 1517 934M771 46 768 484M92 557 376 785 768 484 1163 779 1456 545M312 693 806 1065 1285 683M376 785 528 1287 1029 1280 1163 779M350 1430 528 1287M1229 1415 1029 1280M806 1065 800 1522"/>
            <path d="M778 453 955 468 1059 660 1071 814 961 1008 793 1039 613 1013 502 821 504 664 608 471zM608 471 676 499 899 497 955 468M676 499 609 722 502 821M899 497 971 718 1071 814M778 453 777 630M504 664 613 758 777 630 945 754 1059 660M609 722 792 859 971 718M613 758 678 967 886 965 945 754M613 1013 678 967M961 1008 886 965M792 859 791 1039"/>
          </g>
          <g class="wire cyan">
            <path d="M776 292 1053 312 1215 615 1242 858 1064 1165 795 1221 512 1173 331 870 343 624 506 315zM506 315 610 351 967 348 1053 312M610 351 499 711 331 870M967 348 1088 706 1242 858M776 292 773 572M343 624 517 769 773 572 1033 764 1215 615M499 711 797 935 1088 706M517 769 618 1095 943 1090 1033 764M512 1173 618 1095M1064 1165 943 1090M797 935 795 1221"/>
          </g>
        </svg>
        <g class="axes"><path d="M72 1421V1480L128 1475M72 1480 95 1489"/><text x="77" y="1422">z</text><text x="132" y="1475">y</text><text x="98" y="1490">x</text></g>
      </svg>
      <div class="vlabel"><button>Perspective</button><button class="drop" aria-label="Viewport menu"><svg width="16" height="10"><path d="M0 1H16L8 10z" fill="#fff"/></svg></button></div>
    </div>
    <nav class="vtabs">
      <button aria-label="Four views"><svg width="32" height="30"><path d="M1 2H31V28H1zM16 2V28M1 15H31" fill="none" stroke="#808080" stroke-width="1.500"/><path d="M1 3h6M16 3h6M1 16h6M16 16h6" stroke="#666" stroke-width="2.500"/></svg></button>
      <button aria-label="Single view"><svg width="32" height="30"><path d="M1 2H31V28H1z" fill="none" stroke="#4a8df0" stroke-width="1.500"/><path d="M1 3h7" stroke="#2a78f0" stroke-width="2.500"/></svg></button>
      <button class="vt on">Perspective</button><button class="vt">Top</button><button class="vt">Front</button><button class="vt">Right</button><button class="vt">Layouts...</button>
    </nav>
  </section>

  <section class="panel layers">
    <h2 class="title">Layers<button aria-label="Layer panel options"><svg class="gear"><use href="#gear"/></svg></button></h2>
    <div class="lrow">
      <div class="lmain">
        <div class="ltools">
          <button aria-label="New layer"><svg viewBox="0 0 30 30"><path d="M3 3 27 8V19L18 27 12 25 3 14z" fill="#fff" stroke="#000" stroke-width="1.500"/><path d="M3 3 26 8 15 20 10 18z" fill="#ff8a5c"/><path d="M3 8 13 24V28L3 15z" fill="#1d3f9c"/><path d="M14 17h5v-5h7v5h4v6h-4v6h-7v-6h-5z" fill="#fff"/><path d="M16 20H29M22.500 14V27" stroke="#000" stroke-width="3.500"/></svg></button>
          <button aria-label="New sublayer"><svg viewBox="0 0 30 30"><use href="#layers" x="1" y="1" width="17" height="17"/><use href="#layers" x="12" y="12" width="17" height="17"/><path d="M3 17V26H8M6 23 9 26 6 29" fill="none" stroke="#000" stroke-width="2"/></svg></button>
          <button aria-label="Delete layer"><svg viewBox="0 0 30 30"><path d="M3 2Q16 14 27 28M27 2Q14 14 3 28" fill="none" stroke="#700" stroke-width="5"/><path d="M3 2Q16 14 27 28M27 2Q14 14 3 28" fill="none" stroke="#d5000c" stroke-width="3.500"/></svg></button>
          <button aria-label="Duplicate"><svg viewBox="0 0 30 30"><path d="M8 9 13 8 15 12 28 13V24L17 29 8 25z" fill="#ddd" stroke="#999" stroke-width="1.500"/><path d="M7 25Q-1 19 3 9 9-1 18 5M20 1V8H13" fill="none" stroke="#999" stroke-width="2"/></svg></button>
          <button aria-label="Move up"><svg viewBox="0 0 30 30"><path d="M14 4H16L28 17V20H2V17z" fill="#8da6fb" stroke="#10205a" stroke-width="1.500" stroke-linejoin="round"/></svg></button>
          <button aria-label="Move down"><svg viewBox="0 0 30 30"><path d="M2 7H28V10L16 23H14L2 10z" fill="#8da6fb" stroke="#10205a" stroke-width="1.500" stroke-linejoin="round"/></svg></button>
          <button aria-label="Outdent"><svg viewBox="0 0 30 30"><path d="M23 2V28H21L7 16V14L21 2z" fill="#ddd" stroke="#999" stroke-width="1.500"/></svg></button>
          <button aria-label="Filter"><svg viewBox="0 0 30 30"><path d="M3 4Q15-1 27 4L18 17V29H12V17z" fill="#5d80ee" stroke="#10205a" stroke-width="1.500"/><ellipse cx="15" cy="4" rx="10" ry="2" fill="#cdd8ff"/></svg></button>
          <button aria-label="Columns"><svg viewBox="0 0 30 30"><path d="M4 1H27V29H4z" fill="#fff" stroke="#555" stroke-width="1.500"/><path d="M4 1H27V6H4z" fill="#777"/><path d="M4 12H27M4 18H27M4 23H27M12 6V29M19 6V29" stroke="#777" stroke-width="1.500"/></svg></button>
          <button aria-label="Menu"><svg viewBox="0 0 30 30"><path d="M4 5H26M4 15H26M4 25H26" stroke="#000" stroke-width="3.500" stroke-linecap="round"/></svg></button>
          <button aria-label="Help"><svg viewBox="0 0 30 30"><use href="#helpball" width="30" height="30"/></svg></button>
        </div>
        <div class="search"><svg width="26" height="26" viewBox="0 0 26 26"><circle cx="11" cy="11" r="9.500" fill="none" stroke="#222" stroke-width="2"/><path d="M17 17 25 25" stroke="#222" stroke-width="3"/></svg><input type="text" placeholder="Search" aria-label="Search layers"></div>
        <div class="tbox">
          <table>
            <thead><tr><th class="c-name"><span>Layer</span></th><th class="c"><span></span></th><th class="c"><span></span></th><th class="c"><span></span></th><th class="c"><span></span></th><th class="c-mat"><span>Material</span></th></tr></thead>
            <tbody>
              <tr><td>Dodecahedron 1</td><td></td><td><svg class="ic"><use href="#bulb-on"/></svg></td><td><svg class="ic"><use href="#locked"/></svg></td><td><i class="sw black"></i></td><td><svg class="ball"><use href="#ball"/></svg></td></tr>
              <tr><td>Icosahedron 1</td><td></td><td><svg class="ic"><use href="#bulb-off"/></svg></td><td><svg class="ic"><use href="#locked"/></svg></td><td><i class="sw red"></i></td><td><svg class="ball"><use href="#ball"/></svg></td></tr>
              <tr><td>Dodecahedron 2</td><td></td><td><svg class="ic"><use href="#bulb-on"/></svg></td><td><svg class="ic"><use href="#locked"/></svg></td><td><i class="sw aqua"></i></td><td><svg class="ball"><use href="#ball"/></svg></td></tr>
              <tr><td>Icosahedron 2</td><td></td><td><svg class="ic"><use href="#bulb-off"/></svg></td><td><svg class="ic"><use href="#locked"/></svg></td><td><i class="sw amber"></i></td><td><svg class="ball"><use href="#ball"/></svg></td></tr>
              <tr class="sel"><td>Dodecahedron 3</td><td></td><td><svg class="ic"><use href="#bulb-on"/></svg></td><td><svg class="ic"><use href="#locked"/></svg></td><td><i class="sw black"></i></td><td><svg class="ball"><use href="#ball"/></svg></td></tr>
              <tr><td>Layer 02</td><td></td><td><svg class="ic"><use href="#bulb-off"/></svg></td><td><svg class="ic"><use href="#locked"/></svg></td><td><i class="sw lime"></i></td><td><svg class="ball"><use href="#ball"/></svg></td></tr>
              <tr><td>Shapes</td><td></td><td><svg class="ic"><use href="#bulb-off"/></svg></td><td><svg class="ic"><use href="#unlocked"/></svg></td><td><i class="sw black"></i></td><td><svg class="ball"><use href="#ball"/></svg></td></tr>
              <tr><td>Throughlines</td><td></td><td><svg class="ic"><use href="#bulb-off"/></svg></td><td><svg class="ic"><use href="#unlocked"/></svg></td><td><i class="sw black"></i></td><td><svg class="ball"><use href="#ball"/></svg></td></tr>
              <tr><td>Icosahedron 2 (first)</td><td></td><td><svg class="ic"><use href="#bulb-off"/></svg></td><td><svg class="ic"><use href="#locked"/></svg></td><td><i class="sw yellow"></i></td><td><svg class="ball"><use href="#ball"/></svg></td></tr>
              <tr class="current"><td>Default</td><td><svg width="28" height="22" viewBox="0 0 28 22"><path d="M1 12 10 20 27 1" fill="none" stroke="#222" stroke-width="2.500"/></svg></td><td></td><td></td><td><i class="sw black"></i></td><td><svg class="ball"><use href="#ball"/></svg></td></tr>
            </tbody>
          </table>
          <div class="hbar"><i></i></div>
        </div>
      </div>
      <nav class="side">
        <button aria-label="Properties"><svg width="28" height="28"><use href="#wheel"/></svg></button>
        <button class="on" aria-label="Layers"><svg width="28" height="28"><use href="#layers"/></svg></button>
        <button aria-label="Display"><svg width="32" height="32" viewBox="0 0 32 32"><rect x="2" y="3" width="28" height="22" fill="url(#steel)" stroke="#111" stroke-width="3"/><path d="M14 25h4v3h4v2H10v-2h4z"/></svg></button>
        <button aria-label="Help"><svg width="32" height="32" viewBox="0 0 32 32"><path d="M2 2H30V30H2z" fill="#eee" stroke="#222" stroke-width="2"/><path d="M2 1h28v5H2z" fill="#2846b4"/><use href="#helpball" x="5" y="7" width="22" height="22"/></svg></button>
      </nav>
    </div>
  </section>
</main>

<footer>
  <div class="cmdline">
    <div class="grip grip-v"><i></i><i></i></div>
    <div class="history"><span>Command: _SrfPt</span></div>
    <div class="vbar"><i></i></div>
  </div>
  <div class="status">
    <div class="st-left">
      <button class="st-i" aria-label="Left panel"><svg width="26" height="26"><path d="M2 2H24V24H2z" fill="none" stroke="#4d4d4d" stroke-width="3.500"/><path d="M2 2h8v22H2z" fill="#4d4d4d"/></svg></button>
      <button class="st-i" aria-label="List"><svg width="30" height="28"><path d="M8 3H30M8 14H30M8 25H30" stroke="#666" stroke-width="2.500"/><path d="M0 3H4M0 14H4M0 25H4" stroke="#666" stroke-width="3"/></svg></button>
      <button>CPlane</button><span>x -184.718</span><span>y 336.045</span><span>z 0</span><button>Millimeters</button><button class="lay"><i></i>Default</button>
    </div>
    <div class="st-mid">
      <button>Grid Snap</button><button>Ortho</button><button>Planar</button><button class="on">Osnap</button><button class="on">SmartTrack</button><button>Gumball (CPlane)</button>
      <button class="st-lock" aria-label="Lock CPlane"><svg width="20" height="28"><path d="M5 12V7Q5 2 10 2T15 7V12M1 12H19V26H1z" fill="none" stroke="#8a8a8a" stroke-width="2"/></svg></button>
      <button class="auto">Auto CPlane (Object)</button><button>Record History</button><button class="on">Filter</button><span class="tol">Absolute tolerance</span>
    </div>
    <button class="st-i" aria-label="Right panel"><svg width="26" height="26"><path d="M2 2H24V24H2z" fill="none" stroke="#4d4d4d" stroke-width="3.500"/><path d="M17 2h7v22h-7z" fill="#4d4d4d"/></svg></button>
  </div>
</footer>
</body>
</html>
```

FILE: styles.css
```css
* { box-sizing: border-box; }
body { margin: 0; padding: 0 6px 6px; min-height: 100vh; display: flex; flex-direction: column; gap: 6px; background: #d8d9dd; color: #262626; font: 22px/30px Inter, "Liberation Sans", sans-serif; }
.defs { position: absolute; width: 0; height: 0; }
button { margin: 0; padding: 0; border: 0; background: none; color: inherit; font: inherit; white-space: nowrap; }
button svg { display: block; }
input { font: inherit; margin: 0; }
input::placeholder { color: #bfbfbf; opacity: 1; }
.qmark { font: bold 38px "Liberation Serif", serif; fill: #fff; text-anchor: middle; }
.gear { width: 24px; height: 24px; display: block; }

.grip { display: flex; align-items: center; justify-content: center; gap: 6px; }
.grip i { width: 6px; height: 6px; border: 2px solid #adadad; border-radius: 50%; }
.grip-v { flex-direction: column; width: 26px; flex: none; border-right: 2px solid #d8d9dd; }
.grip-h { height: 26px; border-bottom: 2px solid #d8d9dd; }

/* top toolbar */
.ribbon { display: flex; height: 96px; background: #ebebeb; border-radius: 10px 0 0 10px; }
.ribbon-body { flex: 1; min-width: 0; }
.ribbon-tabs { display: flex; height: 42px; background: #d8d9dd; color: #666; }
.ribbon-tabs button { padding: 0 20px; line-height: 44px; }
.ribbon-tabs .on { position: relative; background: #ebebeb; color: #262626; border-radius: 0 14px 0 0; padding: 0 22px 0 21px; }
.ribbon-tabs .on::after { content: ""; position: absolute; left: 100%; bottom: 0; width: 10px; height: 10px; background: radial-gradient(circle at 100% 0, #d8d9dd 10px, #ebebeb 10px); }
.ribbon-tabs .gear-btn { margin-left: auto; padding: 0 8px; display: flex; align-items: center; }
.tools { display: flex; height: 54px; }
.tools button { position: relative; width: 56px; height: 54px; flex: none; }
.tools svg { width: 56px; height: 54px; }
.more { position: relative; }
.more::after { content: ""; position: absolute; right: 0; bottom: 0; width: 11px; height: 10px; background: #666; clip-path: polygon(100% 0, 100% 100%, 0 100%); }

.work { flex: 1; display: flex; gap: 6px; min-height: 0; }
.panel { background: #ebebeb; border-radius: 10px 10px 0 0; overflow: hidden; }
.title { display: flex; justify-content: space-between; align-items: center; margin: 0; height: 40px; padding: 0 8px 2px 1px; border-bottom: 2px solid #d8d9dd; color: #8a8a8a; font-size: 25px; font-weight: 400; }

/* left column */
.left { width: 252px; flex: none; display: flex; flex-direction: column; gap: 6px; }
.palette { height: 802px; flex: none; }
.cmd { display: block; width: 218px; height: 40px; margin: 22px 0 24px 17px; padding: 0 6px; border: 1px solid #d4d4d4; border-bottom: 2px solid #b4b4b4; background: #fff; font-size: 25px; }
.grid { display: grid; grid-template-columns: repeat(4, 56px); grid-auto-rows: 56px; padding-left: 8px; }
.grid svg { width: 56px; height: 56px; }
.k, .w, .b { stroke: #000; stroke-width: 5; stroke-linejoin: round; }
.k { fill: none; }
.w { fill: #fff; }
.b { fill: url(#blue); }
.g { fill: none; stroke: #808080; stroke-width: 5; }
.t { fill: none; stroke: #2b3350; stroke-width: 4; }
.thick { fill: none; stroke: #1c1c1c; stroke-width: 11; }
.paper { fill: url(#paper); }
.sphere { fill: url(#ballb); }
.band { fill: url(#band); }
.steel { fill: url(#steel); }
.cobalt { fill: #6482fb; }
.navy { fill: #12267a; }
.orange { fill: #ffab10; }

.osnap { flex: 1; }
.otabs { display: flex; height: 40px; background: #d8d9dd; }
.otabs button { width: 72px; display: flex; align-items: center; justify-content: center; }
.otabs .on { position: relative; background: #ebebeb; border-radius: 0 10px 0 0; }
.otabs .on::after { content: ""; position: absolute; left: 100%; bottom: 0; width: 10px; height: 10px; background: radial-gradient(circle at 100% 0, #d8d9dd 10px, #ebebeb 10px); }
.checks { padding: 15px 0 0 28px; }
.checks label { display: flex; align-items: center; gap: 8px; height: 30px; }
.checks .apart { margin-top: 32px; }
.checks input { appearance: none; width: 24px; height: 24px; border: 1px solid #d0d0d0; border-top-color: #bcbcbc; border-radius: 5px; background: #fff; display: grid; place-items: center; }
.checks input:checked { border: 0; background: linear-gradient(#2a8dff, #0a78fb); }
.checks input:checked::before { content: ""; width: 8px; height: 15px; margin-bottom: 4px; border: solid #fff; border-width: 0 3px 3px 0; transform: rotate(38deg); }

/* viewport */
.view { flex: 1; min-width: 0; display: flex; flex-direction: column; background: #f0f0f0; }
.canvas { position: relative; flex: 1; min-height: 0; background: #9ca3ab; overflow: hidden; }
.scene { display: block; width: 100%; height: 100%; position: absolute; }
.wire { fill: none; stroke: #000; stroke-linejoin: round; }
.wire path { stroke-width: 2; vector-effect: non-scaling-stroke; }
.wire.cyan { stroke: #0ff; }
.axes path { fill: none; stroke: #666; stroke-width: 1; }
.axes text { font-size: 26px; fill: #5c5c5c; }
.vlabel { position: absolute; left: 2px; top: 2px; display: flex; height: 38px; background: #00549b; color: #fff; font-weight: 700; font-size: 24px; }
.vlabel button { padding: 0 9px 0 8px; }
.vlabel .drop { width: 32px; padding: 0; border-left: 1px solid #fff; display: grid; place-items: center; }
.vtabs { display: flex; align-items: center; height: 52px; padding-left: 19px; color: #6b6b6b; font-size: 25px; }
.vtabs button:not(.vt) { width: 64px; margin-bottom: 4px; }
.vt { display: flex; height: 28px; align-items: center; line-height: 28px; border-left: 2px solid #8a8a8a; padding: 0 40px 5px 39px; }
.vt:nth-child(3) { margin-left: -5px; }
.vtabs .on { color: #0a6cf0; }

/* layers */
.layers { width: 658px; flex: none; display: flex; flex-direction: column; }
.lrow { flex: 1; display: flex; min-height: 0; }
.lmain { flex: 1; min-width: 0; display: flex; flex-direction: column; padding: 23px 24px 18px 16px; }
.ltools { display: flex; gap: 14px; padding-left: 7px; height: 30px; }
.ltools svg { width: 30px; height: 30px; }
.search { display: flex; align-items: center; gap: 14px; height: 42px; margin: 18px 1px 11px; padding: 0 13px; background: #fff; border: 1px solid #dadada; border-bottom: 2px solid #b6b6b6; border-radius: 10px; }
.search input { flex: 1; border: 0; background: none; padding: 0; font-size: 24px; }
.tbox { flex: 1; background: #fff; display: flex; flex-direction: column; }
table { width: 100%; border-collapse: separate; border-spacing: 0; table-layout: fixed; }
th { height: 56px; padding: 0; text-align: left; font-weight: 400; border-bottom: 2px solid #e3e3e3; }
th span { display: block; height: 32px; line-height: 30px; }
th.c span, th.c-mat span { border-left: 2px solid #e3e3e3; }
th.c { width: 40px; }
th.c-mat { width: 96px; }
th.c-mat span { padding-left: 4px; }
.c-name span { padding-left: 54px; }
tbody::before { content: ""; display: block; height: 10px; }
td { height: 38px; padding: 0 0 2px; line-height: 34px; background: linear-gradient(#e3e3e3, #e3e3e3) bottom / 100% 2px no-repeat; }
td:first-child { padding-left: 54px; background-position: 50px 100%; }
td svg { display: block; }
td .ic { width: 24px; height: 32px; margin-left: 10px; }
td:nth-child(2) svg { margin-left: 8px; }
td .ball { width: 32px; height: 32px; margin-left: 4px; }
.sw { display: block; width: 26px; height: 26px; margin-left: 8px; border: 2px solid #000; }
.black { background: #000; }
.red { background: #c80000; }
.aqua { background: #0ff; }
.amber { background: #ffbf00; }
.lime { background: #0f0; }
.yellow { background: #ffd000; }
.sel td { background: #0063e1; color: #fff; font-weight: 500; }
.sel .ic { filter: drop-shadow(1px 0 0 #fff) drop-shadow(-1px 0 0 #fff) drop-shadow(0 1px 0 #fff) drop-shadow(0 -1px 0 #fff); }
.current td { background: none; font-weight: 700; }
.hbar { margin-top: auto; height: 28px; padding: 6px; background: #fafafa; border-top: 2px solid #e6e6e6; }
.hbar i { display: block; width: 254px; height: 16px; border-radius: 8px; background: #c1c1c1; }
.side { width: 40px; flex: none; background: #ebebeb; display: flex; flex-direction: column; }
.side button { height: 72px; width: 40px; flex: none; display: grid; place-items: center; background: #d8d9dd; }
.side .on { background: #ebebeb; border-radius: 0 10px 10px 0; }
.side button:first-child { border-radius: 0 0 0 10px; }
.side button:nth-child(3) { border-radius: 10px 0 0 0; }
.side::after { content: ""; flex: 1; background: #d8d9dd; }

/* command line and status bar */
footer { background: #ebebeb; color: #4a4a4a; }
.cmdline { display: flex; height: 32px; overflow: hidden; }
.cmdline .grip { width: 40px; }
.history { position: relative; flex: 1; padding-left: 10px; font-size: 23px; line-height: 36px; }
.history::before { content: ""; position: absolute; left: 134px; top: 0; width: 13px; height: 2px; background: #4a4a4a; }
.vbar { width: 26px; margin-right: 2px; padding: 0 5px; background: #fafafa; }
.vbar i { display: block; height: 26px; border-radius: 0 0 8px 8px; background: #c1c1c1; }
.status { display: flex; height: 50px; align-items: center; padding: 2px 9px; }
.st-left { display: grid; grid-template-columns: 38px 68px 131px 145px 181px 130px 166px 220px; align-items: center; justify-items: start; padding-top: 2px; }
.lay { display: flex; align-items: center; gap: 13px; }
.lay i { width: 32px; height: 32px; background: #000; }
.st-mid { flex: 1; min-width: 0; display: flex; align-items: center; gap: 7px; }
.st-mid button { height: 38px; padding: 2px 17px 0; border-radius: 5px; flex: none; }
.st-mid .on { background: #fff; color: #1e1e1e; font-weight: 700; }
.st-mid .st-lock { padding: 0 0 0 22px; width: 39px; }
.st-mid .auto { margin-right: 8px; }
.tol { padding: 2px 0 0 22px; white-space: nowrap; }
```
